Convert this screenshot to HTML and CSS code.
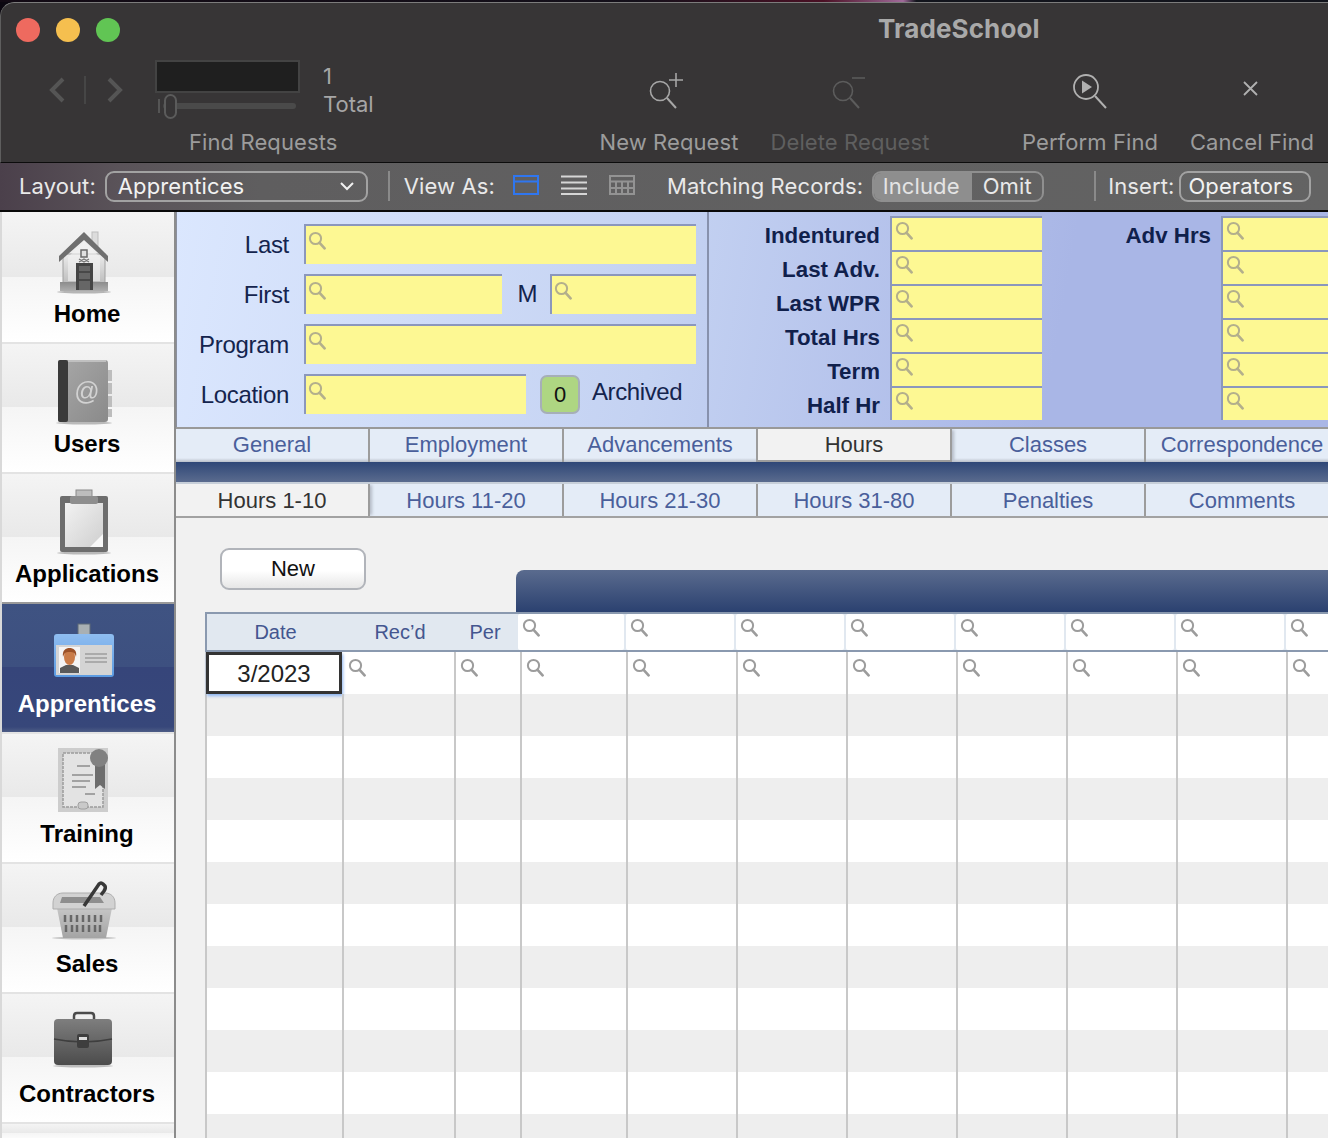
FILE: index.html
```html
<!DOCTYPE html>
<html lang="en">
<head>
<meta charset="utf-8">
<title>TradeSchool</title>
<link rel="stylesheet" href="styles.css">
</head>
<body>
<svg class="defs" width="0" height="0" aria-hidden="true">
  <defs>
    <symbol id="lens" viewBox="0 0 18 20"><circle cx="7.5" cy="7.5" r="5.6" fill="none" stroke="currentColor" stroke-width="2"/><path d="M11.6 11.8 16.6 17.4" fill="none" stroke="currentColor" stroke-width="2.6" stroke-linecap="round"/></symbol>
    <linearGradient id="gHouse" x1="0" y1="0" x2="0" y2="1"><stop offset="0" stop-color="#ececec"/><stop offset="1" stop-color="#bcbcbc"/></linearGradient>
    <linearGradient id="gBase" x1="0" y1="0" x2="0" y2="1"><stop offset="0" stop-color="#8c8c8c"/><stop offset="1" stop-color="#adadad"/></linearGradient>
    <linearGradient id="gBook" x1="0" y1="0" x2="1" y2="1"><stop offset="0" stop-color="#a8a8a8"/><stop offset="1" stop-color="#8a8a8a"/></linearGradient>
    <linearGradient id="gPaper" x1="0" y1="0" x2="1" y2="1"><stop offset="0" stop-color="#f2f2f2"/><stop offset="1" stop-color="#cfcfcf"/></linearGradient>
    <linearGradient id="gCase" x1="0" y1="0" x2="0" y2="1"><stop offset="0" stop-color="#7e7e7e"/><stop offset="1" stop-color="#4c4c4c"/></linearGradient>
    <linearGradient id="gBasket" x1="0" y1="0" x2="0" y2="1"><stop offset="0" stop-color="#c6c6c6"/><stop offset="1" stop-color="#a4a4a4"/></linearGradient>
    <linearGradient id="gBadge" x1="0" y1="0" x2="0" y2="1"><stop offset="0" stop-color="#8fbdf0"/><stop offset="1" stop-color="#5b9be2"/></linearGradient>
  </defs>
</svg>

<div class="wallpaper"></div>
<div class="window">
  <header class="chrome">
    <div class="titlebar">
      <div class="lights"><span class="light red"></span><span class="light amber"></span><span class="light green"></span></div>
      <div class="title">TradeSchool</div>
    </div>
    <div class="toolbar">
      <div class="requests">
        <div class="requests-row">
          <div class="nav">
            <svg class="chev" viewBox="0 0 16 26"><path d="M14 2 3 13l11 11" fill="none" stroke="#555" stroke-width="4"/></svg>
            <span class="nav-sep"></span>
            <svg class="chev" viewBox="0 0 16 26"><path d="M2 2l11 11L2 24" fill="none" stroke="#555" stroke-width="4"/></svg>
          </div>
          <div class="record">
            <div class="record-box"></div>
            <div class="slider"><span class="slider-tick"></span><span class="slider-thumb"></span><span class="slider-track"></span></div>
          </div>
          <div class="count"><span>1</span><span>Total</span></div>
        </div>
        <div class="tool-label requests-label">Find Requests</div>
      </div>
      <div class="tool tool-new">
        <svg class="tool-icon" viewBox="0 0 50 50"><circle cx="18" cy="26" r="9.5" fill="none" stroke="#a6a6a6" stroke-width="1.6"/><path d="M25 33l9 10" stroke="#a6a6a6" stroke-width="2"/><path d="M34 8v14M27 15h14" stroke="#a6a6a6" stroke-width="1.6"/></svg>
        <div class="tool-label">New Request</div>
      </div>
      <div class="tool tool-delete">
        <svg class="tool-icon" viewBox="0 0 50 50"><circle cx="20" cy="26" r="9.5" fill="none" stroke="#5c5c5c" stroke-width="1.6"/><path d="M27 33l9 10" stroke="#5c5c5c" stroke-width="2"/><path d="M29 13h13" stroke="#5c5c5c" stroke-width="1.6"/></svg>
        <div class="tool-label dim">Delete Request</div>
      </div>
      <div class="tool tool-find">
        <svg class="tool-icon" viewBox="0 0 50 50"><circle cx="23" cy="22" r="12" fill="none" stroke="#b0b0b0" stroke-width="1.8"/><path d="M19 15.500 29 22l-10 6.500z" fill="#b0b0b0"/><path d="M32 31l11 12" stroke="#b0b0b0" stroke-width="2"/></svg>
        <div class="tool-label">Perform Find</div>
      </div>
      <div class="tool tool-cancel">
        <svg class="tool-icon" viewBox="0 0 50 50"><path d="M19 17l13 13M32 17 19 30" stroke="#b0b0b0" stroke-width="1.8"/></svg>
        <div class="tool-label">Cancel Find</div>
      </div>
    </div>
  </header>

  <div class="statusbar">
    <span class="st-text st-layout">Layout:</span>
    <div class="select"><span>Apprentices</span><svg width="16" height="10" viewBox="0 0 16 10"><path d="M2 2l6 6 6-6" fill="none" stroke="#f0f0f0" stroke-width="2"/></svg></div>
    <span class="st-sep sep-a"></span>
    <span class="st-text st-view">View As:</span>
    <svg class="view-icon view-form" viewBox="0 0 26 20"><rect x="1" y="1" width="24" height="18" fill="none" stroke="#2f76f0" stroke-width="2"/><path d="M1 6.500h24" stroke="#2f76f0" stroke-width="2"/></svg>
    <svg class="view-icon view-list" viewBox="0 0 26 20"><path d="M0 1.500h26M0 7.500h26M0 13.500h26M0 19h26" stroke="#d6d6d6" stroke-width="2"/></svg>
    <svg class="view-icon view-table" viewBox="0 0 26 20"><rect x="1" y="1" width="24" height="18" fill="none" stroke="#939393" stroke-width="2"/><path d="M1 6.500h24M1 13h24M7 6.500V19M13 6.500V19M19 6.500V19" stroke="#939393" stroke-width="2"/></svg>
    <span class="st-text st-match">Matching Records:</span>
    <div class="segment"><span class="seg-on">Include</span><span class="seg-off">Omit</span></div>
    <span class="st-sep sep-b"></span>
    <span class="st-text st-insert">Insert:</span>
    <div class="insert-btn">Operators</div>
  </div>

  <div class="main">
    <nav class="sidebar">
      <a class="side-item side-first">
        <svg class="side-icon" viewBox="2 0 172 88">
          <ellipse cx="84" cy="80" rx="27" ry="1.500" fill="#b5b5b5"/>
          <rect x="92" y="20" width="6" height="14" fill="#dcdcdc" stroke="#bdbdbd"/>
          <rect x="63" y="42" width="42" height="30" fill="url(#gHouse)" stroke="#a0a0a0"/>
          <path d="M84 30 68 45v24h32V45z" fill="#f2f2f2" opacity=".6"/>
          <path d="M59 50v-6l25-24 24 24v6L84 28z" fill="#6f6f6f"/>
          <rect x="81" y="38" width="6" height="7" fill="#e0e0e0" stroke="#6a6a6a" stroke-width="1.500"/>
          <path d="M79 47l5 3 5-3M79 50l5-3 5 3" stroke="#777" stroke-width="1.400" fill="none"/>
          <rect x="60" y="70" width="48" height="9" fill="url(#gBase)"/>
          <rect x="76" y="51" width="17" height="27" fill="#444"/>
          <rect x="79" y="54" width="11" height="24" fill="#666"/>
          <path d="M79 60h11M79 68h11" stroke="#3f3f3f" stroke-width="1.500"/>
        </svg>
        <span class="side-label">Home</span>
      </a>
      <a class="side-item">
        <svg class="side-icon" viewBox="2 0 172 88">
          <ellipse cx="84" cy="81" rx="28" ry="1.500" fill="#b9b9b9"/>
          <path d="M108 28h4v11h-4zM108 41h4v11h-4zM108 54h4v11h-4zM108 67h4v8h-4z" fill="#bdbdbd"/>
          <rect x="58" y="18" width="50" height="62" rx="3" fill="url(#gBook)"/>
          <rect x="58" y="18" width="10" height="62" rx="2" fill="#3a3a3a"/>
          <path d="M68 19h38" stroke="#c0c0c0" stroke-width="2"/>
          <text class="at" x="87" y="58">@</text>
        </svg>
        <span class="side-label">Users</span>
      </a>
      <a class="side-item">
        <svg class="side-icon" viewBox="2 0 172 88">
          <ellipse cx="84" cy="81" rx="27" ry="1.500" fill="#b9b9b9"/>
          <rect x="60" y="24" width="48" height="56" rx="2" fill="#6d6d6d"/>
          <rect x="65" y="31" width="38" height="44" fill="url(#gPaper)"/>
          <path d="M103 62v13H90z" fill="#f8f8f8"/>
          <rect x="76" y="18" width="16" height="7" fill="#bdbdbd" stroke="#8a8a8a"/>
          <rect x="70" y="24" width="28" height="8" rx="2" fill="#8e8e8e"/>
        </svg>
        <span class="side-label">Applications</span>
      </a>
      <a class="side-item active">
        <svg class="side-icon" viewBox="2 0 172 88">
          <rect x="78" y="22" width="12" height="11" fill="#a9b0b3" stroke="#5e6b78"/>
          <rect x="54" y="32" width="60" height="43" rx="3" fill="url(#gBadge)"/>
          <rect x="56" y="43" width="56" height="30" fill="#d4d4d4"/>
          <rect x="59" y="45" width="21" height="26" fill="#f4f4f4"/>
          <path d="M60 71v-5l6-3h7l6 3v5z" fill="#5a5a5a"/>
          <ellipse cx="69.500" cy="55" rx="5.500" ry="8" fill="#c97b48"/>
          <path d="M63 55c-1-7 3-9 6.500-9s8 2 6.500 9c-1-4-2-5-6.500-5s-5 1-6.500 5z" fill="#9b5128"/>
          <path d="M85 52h22M85 56h22M85 60h22" stroke="#9d9d9d" stroke-width="1.400"/>
        </svg>
        <span class="side-label">Apprentices</span>
      </a>
      <a class="side-item">
        <svg class="side-icon" viewBox="2 0 172 88">
          <rect x="58" y="16" width="50" height="64" fill="#cdcdcd"/>
          <rect x="63" y="21" width="40" height="54" fill="#e3e3e3" stroke="#9c9c9c" stroke-width="1.500" stroke-dasharray="3 1"/>
          <path d="M77 34h13M72 43h21M72 49h18M72 55h14M85 62h10" stroke="#a2a2a2" stroke-width="2"/>
          <rect x="78" y="70" width="10" height="7" rx="3" fill="#c9c9c9" stroke="#a0a0a0"/>
          <path d="M95 33h10v24l-5-4-5 4z" fill="#6d6d6d"/>
          <circle cx="99" cy="26" r="9" fill="#818181"/>
        </svg>
        <span class="side-label">Training</span>
      </a>
      <a class="side-item">
        <svg class="side-icon" viewBox="2 0 172 88">
          <ellipse cx="84" cy="76" rx="32" ry="1.500" fill="#c4c4c4"/>
          <path d="M57 46h55l-6 30H63z" fill="url(#gBasket)"/>
          <path d="M65 53v7M71 53v7M77 53v7M83 53v7M89 53v7M95 53v7M101 53v7M66 63v7M72 63v7M77 63v7M83 63v7M89 63v7M95 63v7M100 63v7" stroke="#676767" stroke-width="2.500"/>
          <path d="M53 41c0-6 4-10 10-10h42c6 0 10 4 10 10v6H53z" fill="#d2d2d2" stroke="#adadad"/>
          <path d="M62 35h38l4 6H60z" fill="#8e8e8e"/>
          <path d="M84 44 99 22q2-2 4 0l2 2q1 2-1 5l-3 4" fill="none" stroke="#383838" stroke-width="3.500"/>
        </svg>
        <span class="side-label">Sales</span>
      </a>
      <a class="side-item">
        <svg class="side-icon" viewBox="2 0 172 88">
          <ellipse cx="83" cy="74" rx="30" ry="1.500" fill="#bdbdbd"/>
          <path d="M74 29v-5q0-3 3-3h14q3 0 3 3v5" fill="none" stroke="#4b4b4b" stroke-width="2.500"/>
          <rect x="54" y="27" width="58" height="46" rx="4" fill="url(#gCase)"/>
          <path d="M54 47q29 6 58 0" fill="none" stroke="#3e3e3e" stroke-width="1.500"/>
          <rect x="77" y="42" width="12" height="14" rx="2" fill="#3e3e3e"/>
          <rect x="79" y="45" width="8" height="3" fill="#dcdcdc"/>
        </svg>
        <span class="side-label">Contractors</span>
      </a>
      <a class="side-item side-tail"></a>
    </nav>

    <section class="content">
      <div class="find-panel">
        <div class="find-left">
          <div class="f-row"><label class="f-label">Last</label><div class="field f-wide"><svg class="lens"><use href="#lens"/></svg></div></div>
          <div class="f-row"><label class="f-label">First</label><div class="field f-first"><svg class="lens"><use href="#lens"/></svg></div><label class="f-m">M</label><div class="field f-mid"><svg class="lens"><use href="#lens"/></svg></div></div>
          <div class="f-row"><label class="f-label">Program</label><div class="field f-wide"><svg class="lens"><use href="#lens"/></svg></div></div>
          <div class="f-row"><label class="f-label">Location</label><div class="field f-loc"><svg class="lens"><use href="#lens"/></svg></div><div class="zero">0</div><span class="archived">Archived</span></div>
        </div>
        <div class="find-right">
          <label class="b-label">Indentured</label><div class="field"><svg class="lens"><use href="#lens"/></svg></div><label class="b-label">Adv Hrs</label><div class="field"><svg class="lens"><use href="#lens"/></svg></div>
          <label class="b-label">Last Adv.</label><div class="field"><svg class="lens"><use href="#lens"/></svg></div><span></span><div class="field"><svg class="lens"><use href="#lens"/></svg></div>
          <label class="b-label">Last WPR</label><div class="field"><svg class="lens"><use href="#lens"/></svg></div><span></span><div class="field"><svg class="lens"><use href="#lens"/></svg></div>
          <label class="b-label">Total Hrs</label><div class="field"><svg class="lens"><use href="#lens"/></svg></div><span></span><div class="field"><svg class="lens"><use href="#lens"/></svg></div>
          <label class="b-label">Term</label><div class="field"><svg class="lens"><use href="#lens"/></svg></div><span></span><div class="field"><svg class="lens"><use href="#lens"/></svg></div>
          <label class="b-label">Half Hr</label><div class="field"><svg class="lens"><use href="#lens"/></svg></div><span></span><div class="field"><svg class="lens"><use href="#lens"/></svg></div>
        </div>
      </div>

      <div class="tabs tabs-top">
        <div class="tab">General</div><div class="tab">Employment</div><div class="tab">Advancements</div><div class="tab on">Hours</div><div class="tab">Classes</div><div class="tab">Correspondence</div>
      </div>
      <div class="band"></div>
      <div class="tabs tabs-sub">
        <div class="tab on">Hours 1-10</div><div class="tab">Hours 11-20</div><div class="tab">Hours 21-30</div><div class="tab">Hours 31-80</div><div class="tab">Penalties</div><div class="tab">Comments</div>
      </div>

      <div class="pane">
        <div class="pane-head">
          <div class="new-btn">New</div>
          <div class="blue-head"></div>
        </div>
        <div class="table">
          <div class="thead">
            <div class="th">Date</div><div class="th">Rec’d</div><div class="th th-per">Per</div>
            <div class="hf"><svg class="lens g"><use href="#lens"/></svg></div><div class="hf"><svg class="lens g"><use href="#lens"/></svg></div><div class="hf"><svg class="lens g"><use href="#lens"/></svg></div><div class="hf"><svg class="lens g"><use href="#lens"/></svg></div><div class="hf"><svg class="lens g"><use href="#lens"/></svg></div><div class="hf"><svg class="lens g"><use href="#lens"/></svg></div><div class="hf"><svg class="lens g"><use href="#lens"/></svg></div><div class="hf"><svg class="lens g"><use href="#lens"/></svg></div>
          </div>
          <div class="tr">
            <div class="td date-cell">3/2023</div>
            <div class="td"><svg class="lens g"><use href="#lens"/></svg></div><div class="td"><svg class="lens g"><use href="#lens"/></svg></div><div class="td"><svg class="lens g"><use href="#lens"/></svg></div><div class="td"><svg class="lens g"><use href="#lens"/></svg></div><div class="td"><svg class="lens g"><use href="#lens"/></svg></div><div class="td"><svg class="lens g"><use href="#lens"/></svg></div><div class="td"><svg class="lens g"><use href="#lens"/></svg></div><div class="td"><svg class="lens g"><use href="#lens"/></svg></div><div class="td"><svg class="lens g"><use href="#lens"/></svg></div><div class="td"><svg class="lens g"><use href="#lens"/></svg></div>
          </div>
          <div class="tr"><div class="td"></div><div class="td"></div><div class="td"></div><div class="td"></div><div class="td"></div><div class="td"></div><div class="td"></div><div class="td"></div><div class="td"></div><div class="td"></div><div class="td"></div></div>
          <div class="tr"><div class="td"></div><div class="td"></div><div class="td"></div><div class="td"></div><div class="td"></div><div class="td"></div><div class="td"></div><div class="td"></div><div class="td"></div><div class="td"></div><div class="td"></div></div>
          <div class="tr"><div class="td"></div><div class="td"></div><div class="td"></div><div class="td"></div><div class="td"></div><div class="td"></div><div class="td"></div><div class="td"></div><div class="td"></div><div class="td"></div><div class="td"></div></div>
          <div class="tr"><div class="td"></div><div class="td"></div><div class="td"></div><div class="td"></div><div class="td"></div><div class="td"></div><div class="td"></div><div class="td"></div><div class="td"></div><div class="td"></div><div class="td"></div></div>
          <div class="tr"><div class="td"></div><div class="td"></div><div class="td"></div><div class="td"></div><div class="td"></div><div class="td"></div><div class="td"></div><div class="td"></div><div class="td"></div><div class="td"></div><div class="td"></div></div>
          <div class="tr"><div class="td"></div><div class="td"></div><div class="td"></div><div class="td"></div><div class="td"></div><div class="td"></div><div class="td"></div><div class="td"></div><div class="td"></div><div class="td"></div><div class="td"></div></div>
          <div class="tr"><div class="td"></div><div class="td"></div><div class="td"></div><div class="td"></div><div class="td"></div><div class="td"></div><div class="td"></div><div class="td"></div><div class="td"></div><div class="td"></div><div class="td"></div></div>
          <div class="tr"><div class="td"></div><div class="td"></div><div class="td"></div><div class="td"></div><div class="td"></div><div class="td"></div><div class="td"></div><div class="td"></div><div class="td"></div><div class="td"></div><div class="td"></div></div>
          <div class="tr"><div class="td"></div><div class="td"></div><div class="td"></div><div class="td"></div><div class="td"></div><div class="td"></div><div class="td"></div><div class="td"></div><div class="td"></div><div class="td"></div><div class="td"></div></div>
          <div class="tr"><div class="td"></div><div class="td"></div><div class="td"></div><div class="td"></div><div class="td"></div><div class="td"></div><div class="td"></div><div class="td"></div><div class="td"></div><div class="td"></div><div class="td"></div></div>
          <div class="tr"><div class="td"></div><div class="td"></div><div class="td"></div><div class="td"></div><div class="td"></div><div class="td"></div><div class="td"></div><div class="td"></div><div class="td"></div><div class="td"></div><div class="td"></div></div>
        </div>
      </div>
    </section>
  </div>
</div>
</body>
</html>
```

FILE: styles.css
```css
* { box-sizing: border-box; }
html, body { margin: 0; padding: 0; height: 100%; overflow: hidden; background: #0b0710; }
body { font-family: "Liberation Sans", Arial, sans-serif; }
.defs { display: block; height: 0; }

.wallpaper { height: 2px; background: linear-gradient(90deg, #120a14 0, #14101a 48%, #4a1024 62%, #a06a9a 68%, #12141c 69%, #12141c 100%); }
.window { width: 1328px; height: 1136px; display: flex; flex-direction: column; overflow: hidden; border-radius: 14px 0 0 0; }

/* window chrome */
.chrome { height: 161px; flex: none; background: #373536; border-top: 1px solid #7c7c7c; border-left: 1px solid #5e5e5e; font-family: Inter, "Liberation Sans", sans-serif; border-bottom: 1px solid #0c0c0c; border-radius: 14px 0 0 0; }
.titlebar { height: 51px; position: relative; padding: 15px 0 0 15px; }
.lights { display: flex; gap: 16px; }
.light { width: 24px; height: 24px; border-radius: 50%; }
.red { background: #ee6a5f; }
.amber { background: #f5bf4f; }
.green { background: #61c554; }
.title { position: absolute; left: 877px; top: 11px; font-size: 26px; line-height: 30px; font-weight: 700; color: #a9a9a9; letter-spacing: 0.1px; white-space: nowrap; }

.toolbar { display: flex; height: 108px; }
.tool-label { font-size: 22px; line-height: 28px; color: #9c9c9c; white-space: nowrap; letter-spacing: 0.1px; }
.tool-label.dim { color: #5f5f5f; }
.requests { width: 588px; flex: none; display: flex; flex-direction: column; }
.requests-row { display: flex; height: 74px; padding-top: 6px; }
.nav { display: flex; align-items: center; width: 154px; padding: 0 0 0 48px; height: 60px; }
.chev { width: 16px; height: 26px; flex: none; }
.nav-sep { width: 2px; height: 28px; background: #464646; margin: 0 21px 0 19px; }
.record { width: 168px; }
.record-box { width: 145px; height: 33px; background: #1f1f1f; border: 2px solid #434343; }
.slider { position: relative; width: 145px; height: 26px; margin-top: 1px; }
.slider-track { position: absolute; left: 8px; top: 9px; width: 133px; height: 6px; border-radius: 3px; background: #4a4a4a; }
.slider-tick { position: absolute; left: 3px; top: 5px; width: 2px; height: 14px; background: #555; }
.slider-thumb { position: absolute; left: 9px; top: 0; width: 13px; height: 25px; border: 2px solid #5b5b5b; border-radius: 7px; background: #373536; z-index: 1; }
.count { display: flex; flex-direction: column; font-size: 22px; line-height: 28px; color: #a6a6a6; padding-top: 2px; }
.requests-label { margin-left: 188px; }

.tool { display: flex; flex-direction: column; align-items: center; width: 160px; flex: none; }
.tool-icon { width: 50px; height: 50px; margin: 11px 4px 13px 0; flex: none; }
.tool-delete { margin-left: 21px; }
.tool-find { margin-left: 80px; }
.tool-cancel { margin-left: 2px; }

/* status bar */
.statusbar { height: 49px; flex: none; display: flex; align-items: center; padding: 0 0 1px 19px; background: linear-gradient(90deg, #4b404b 0, #5a5359 120px, #5f5e5f 260px, #636363 100%); color: #e9e9e9; font-family: Inter, "Liberation Sans", sans-serif; font-size: 22px; letter-spacing: 0.1px; border-bottom: 2px solid #0a0a0a; }
.st-text { white-space: nowrap; }
.select { width: 263px; height: 31px; margin-left: 9px; border: 2px solid #a2a2a2; border-radius: 9px; display: flex; align-items: center; justify-content: space-between; padding: 0 11px 0 11px; color: #f2f2f2; }
.st-sep { width: 2px; height: 30px; background: #8a8a8a; }
.sep-a { margin-left: 20px; }
.st-view { margin-left: 14px; }
.view-icon { width: 26px; height: 20px; flex: none; margin-bottom: 2px; }
.view-form { margin-left: 18px; }
.view-list { margin-left: 22px; }
.view-table { margin-left: 22px; }
.st-match { margin-left: 32px; }
.segment { display: flex; width: 172px; height: 31px; margin-left: 9px; border: 2px solid #8f8f8f; border-radius: 9px; overflow: hidden; }
.seg-on { width: 98px; padding-right: 4px; background: #8e8e8e; color: #e4e4e4; display: flex; align-items: center; justify-content: center; }
.seg-off { flex: 1; display: flex; align-items: center; justify-content: center; color: #e9e9e9; }
.sep-b { margin-left: 50px; }
.st-insert { margin-left: 12px; }
.insert-btn { width: 132px; height: 31px; margin-left: 5px; border: 2px solid #a2a2a2; border-radius: 9px; display: flex; align-items: center; padding-left: 7px; color: #f2f2f2; }

/* main */
.main { flex: 1; display: flex; min-height: 0; }
.sidebar { width: 176px; flex: none; background: #f4f4f4; border-left: 2px solid #d9d9d9; border-right: 2px solid #8c8c8c; overflow: hidden; }
.side-item { display: block; height: 130px; border-top: 2px solid #e3e3e3; background: linear-gradient(#f4f4f4 0, #e9e9e9 49%, #f5f5f5 49.5%, #ffffff 100%); text-align: center; }
.side-first { border-top-color: #f4f4f4; }
.side-icon { display: block; width: 172px; height: 88px; margin-top: -2px; filter: blur(0.45px); }
.side-label { display: block; font-size: 24px; font-weight: 700; line-height: 28px; color: #000; padding-right: 2px; }
.at { font-family: "Liberation Sans", sans-serif; font-size: 25px; fill: #d2d2d2; text-anchor: middle; }
.side-item.active { background: linear-gradient(#3f5382 0, #3d5080 49%, #36457a 49.5%, #37477a 96%, #4d5c85 100%); border-top: 2px solid #9a9a9a; }
.side-item.active .side-label { color: #fff; }
.side-tail { height: 20px; }

.content { flex: 1; min-width: 0; background: #f1f1f1; overflow: hidden; }

/* find panel */
.find-panel { height: 215px; display: flex; background: linear-gradient(100deg, #dbe7fe 0, #c4d2f2 42%, #a9b6e6 76%, #a9b6e6 100%); }
.find-left { width: 533px; flex: none; border-left: 1px solid #8a8f9e; border-right: 2px solid #8791ad; padding: 12px 0 0 0; display: flex; flex-direction: column; gap: 10px; }
.f-row { display: flex; align-items: center; height: 40px; }
.f-label { width: 113px; text-align: right; font-size: 24px; letter-spacing: -0.3px; color: #14244e; margin-right: 14px; padding: 2px 1px 0 0; white-space: nowrap; }
.field { position: relative; height: 100%; background: #fdf893; border-top: 2px solid #8b97bc; border-left: 2px solid #8b97bc; }
.lens { display: block; width: 18px; height: 20px; margin: 5px 0 0 2px; color: #b3af8c; }
.find-right .lens { margin-top: 3px; margin-left: 3px; }
.lens.g { color: #9c9c9c; margin: 6px 0 0 4px; }
.f-wide { width: 392px; }
.f-first { width: 198px; }
.f-m { width: 48px; padding-left: 3px; text-align: center; font-size: 24px; color: #14244e; }
.f-mid { width: 146px; }
.f-loc { width: 222px; }
.zero { width: 40px; height: 39px; margin-left: 14px; background: #aed682; border: 2px solid #a6afb8; border-radius: 7px; font-size: 22px; line-height: 36px; text-align: center; color: #111; }
.archived { margin-left: 12px; font-size: 24px; letter-spacing: -0.4px; color: #14244e; position: relative; top: -2px; }
.find-right { flex: 1; min-width: 0; display: grid; grid-template-columns: 171px 162px 169px 1fr; grid-auto-rows: 34px; padding-top: 4px; align-content: start; }
.b-label { font-size: 22.300px; font-weight: 700; color: #10204c; text-align: right; line-height: 39px; white-space: nowrap; }
.find-right .field { margin-left: 10px; }

/* tabs */
.tabs { display: grid; grid-template-columns: repeat(6, 194px); background: #e4ecf7; overflow: hidden; }
.tabs-top { border-top: 2px solid #999; height: 35px; }
.tabs-sub { height: 36px; border-top: 2px solid #c7cfd9; border-bottom: 2px solid #a2a2a2; }
.tab { display: flex; align-items: center; justify-content: center; font-size: 22px; color: #4a5f9b; background: linear-gradient(#e4ecf7 0, #e4ecf7 88%, #b9bfc9 100%); border-right: 2px solid #9c9c9c; white-space: nowrap; }
.tabs-top .tab { padding-bottom: 1px; }
.tabs-sub .tab { padding-top: 1px; background: #e4ecf7; }
.tab:last-child { border-right-color: transparent; }
.tab.on { background: #f2f2f2; color: #333; position: relative; box-shadow: 3px 0 3px -1px #b4bbc6; }
.tabs-sub .tab.on { background: #f2f2f2; }
.tabs-top .tab.on { box-shadow: inset 0 -2px #9c9c9c, 3px 0 3px -1px #b4bbc6; }
.band { height: 20px; background: linear-gradient(#2f4777 0, #5a6b8e 100%); }

/* pane */
.pane-head { display: flex; height: 94px; padding: 30px 0 0 44px; }
.new-btn { width: 146px; height: 42px; border: 2px solid #b1b4ba; border-radius: 9px; background: linear-gradient(#fff 0, #fff 55%, #e6e6e6 100%); font-size: 22px; line-height: 38px; text-align: center; color: #111; flex: none; }
.blue-head { flex: 1; margin: 22px 0 0 150px; height: 42px; border-radius: 8px 0 0 0; background: linear-gradient(#5a6b8e 0, #2b4170 100%); }
.table { margin-left: 29px; border-left: 2px solid #c8c8c8; }
.thead { display: grid; grid-template-columns: 137px 112px 62px 108px repeat(7, 110px); grid-template-rows: 36px; height: 40px; background: #e1e8f0; border-top: 2px solid #8a99af; border-bottom: 2px solid #8a99af; margin-left: -2px; border-left: 2px solid #8a99af; }
.th { font-size: 20px; color: #44568f; text-align: center; line-height: 36px; }
.th-per { padding-right: 4px; }
.hf { background: #fff; margin-right: 2px; border-radius: 2px; }
.hf .lens.g { margin: 4px 0 0 4px; }
.tr { display: grid; grid-template-columns: 137px 112px 66px 106px repeat(7, 110px); height: 42px; background: #fff; }
.tr:nth-child(odd) { background: #eee; }
.td { border-right: 2px solid #c8c8c8; min-width: 0; }
.date-cell { background: #fff; border: 3px solid #333; margin: 0 0 0 -1px; font-size: 24px; line-height: 37px; text-align: center; color: #222; box-shadow: 1px 2px 3px #8ab4f2; width: 136px; height: 42px; }
```
